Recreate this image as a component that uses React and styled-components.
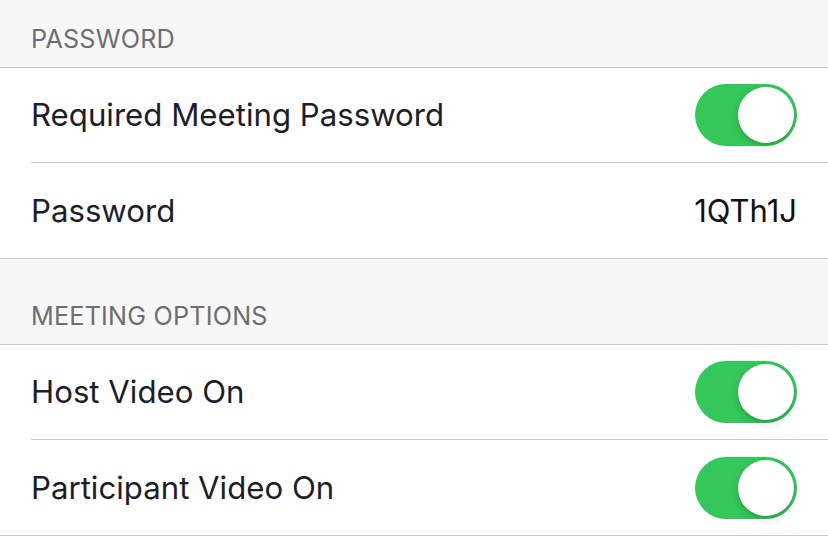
import React, { useState } from 'react'
import styled, { createGlobalStyle } from 'styled-components'

const GlobalStyle = createGlobalStyle`
  html, body {
    margin: 0;
    padding: 0;
    background: #f7f7f7;
  }
  body {
    font-family: Inter, "Noto Sans", "Liberation Sans", sans-serif;
    -webkit-font-smoothing: antialiased;
  }
`

const Page = styled.div`
  width: 828px;
  height: 536px;
  overflow: hidden;
  background: #f7f7f7;
`

const SectionHeader = styled.div`
  height: ${({ tall }) => (tall ? 86 : 68)}px;
  box-sizing: border-box;
  display: flex;
  align-items: flex-end;
  padding: 0 31px 13px;
  color: #6d6d72;
  font-size: 25.2px;
  letter-spacing: 0.2px;
  border-bottom: 1px solid #c8c7cc;
`

const Group = styled.div`
  background: #fff;
  border-bottom: 1px solid #c8c7cc;
`

const Row = styled.div`
  height: ${({ last }) => (last ? 95 : 94)}px;
  margin-left: 31px;
  padding-right: 31px;
  display: flex;
  align-items: center;
  justify-content: space-between;
  border-bottom: ${({ last }) => (last ? 'none' : '1px solid #c8c7cc')};
`

const Label = styled.span`
  font-size: 31.2px;
  color: #1d1d29;
`

const Value = styled.span`
  font-size: 31px;
  color: #111;
`

const Track = styled.button`
  width: 102px;
  height: 62px;
  border: none;
  border-radius: 31px;
  padding: 3px;
  background: ${({ on }) => (on ? '#34c759' : '#e5e5ea')};
  display: flex;
  justify-content: ${({ on }) => (on ? 'flex-end' : 'flex-start')};
  align-items: center;
  cursor: pointer;
  box-sizing: border-box;
`

const Knob = styled.span`
  width: 56px;
  height: 56px;
  border-radius: 50%;
  background: #fff;
  box-shadow: 0 3px 8px rgba(0, 0, 0, 0.15), 0 3px 1px rgba(0, 0, 0, 0.06);
`

const Toggle = ({ initial }) => {
  const [on, setOn] = useState(initial)
  return (
    <Track on={on ? 1 : 0} onClick={() => setOn(!on)}>
      <Knob />
    </Track>
  )
}

const App = () => (
  <Page>
    <GlobalStyle />
    <SectionHeader>PASSWORD</SectionHeader>
    <Group>
      <Row>
        <Label>Required Meeting Password</Label>
        <Toggle initial />
      </Row>
      <Row last>
        <Label>Password</Label>
        <Value>1QTh1J</Value>
      </Row>
    </Group>
    <SectionHeader tall>MEETING OPTIONS</SectionHeader>
    <Group>
      <Row>
        <Label>Host Video On</Label>
        <Toggle initial />
      </Row>
      <Row last>
        <Label>Participant Video On</Label>
        <Toggle initial />
      </Row>
    </Group>
  </Page>
)

export default App
